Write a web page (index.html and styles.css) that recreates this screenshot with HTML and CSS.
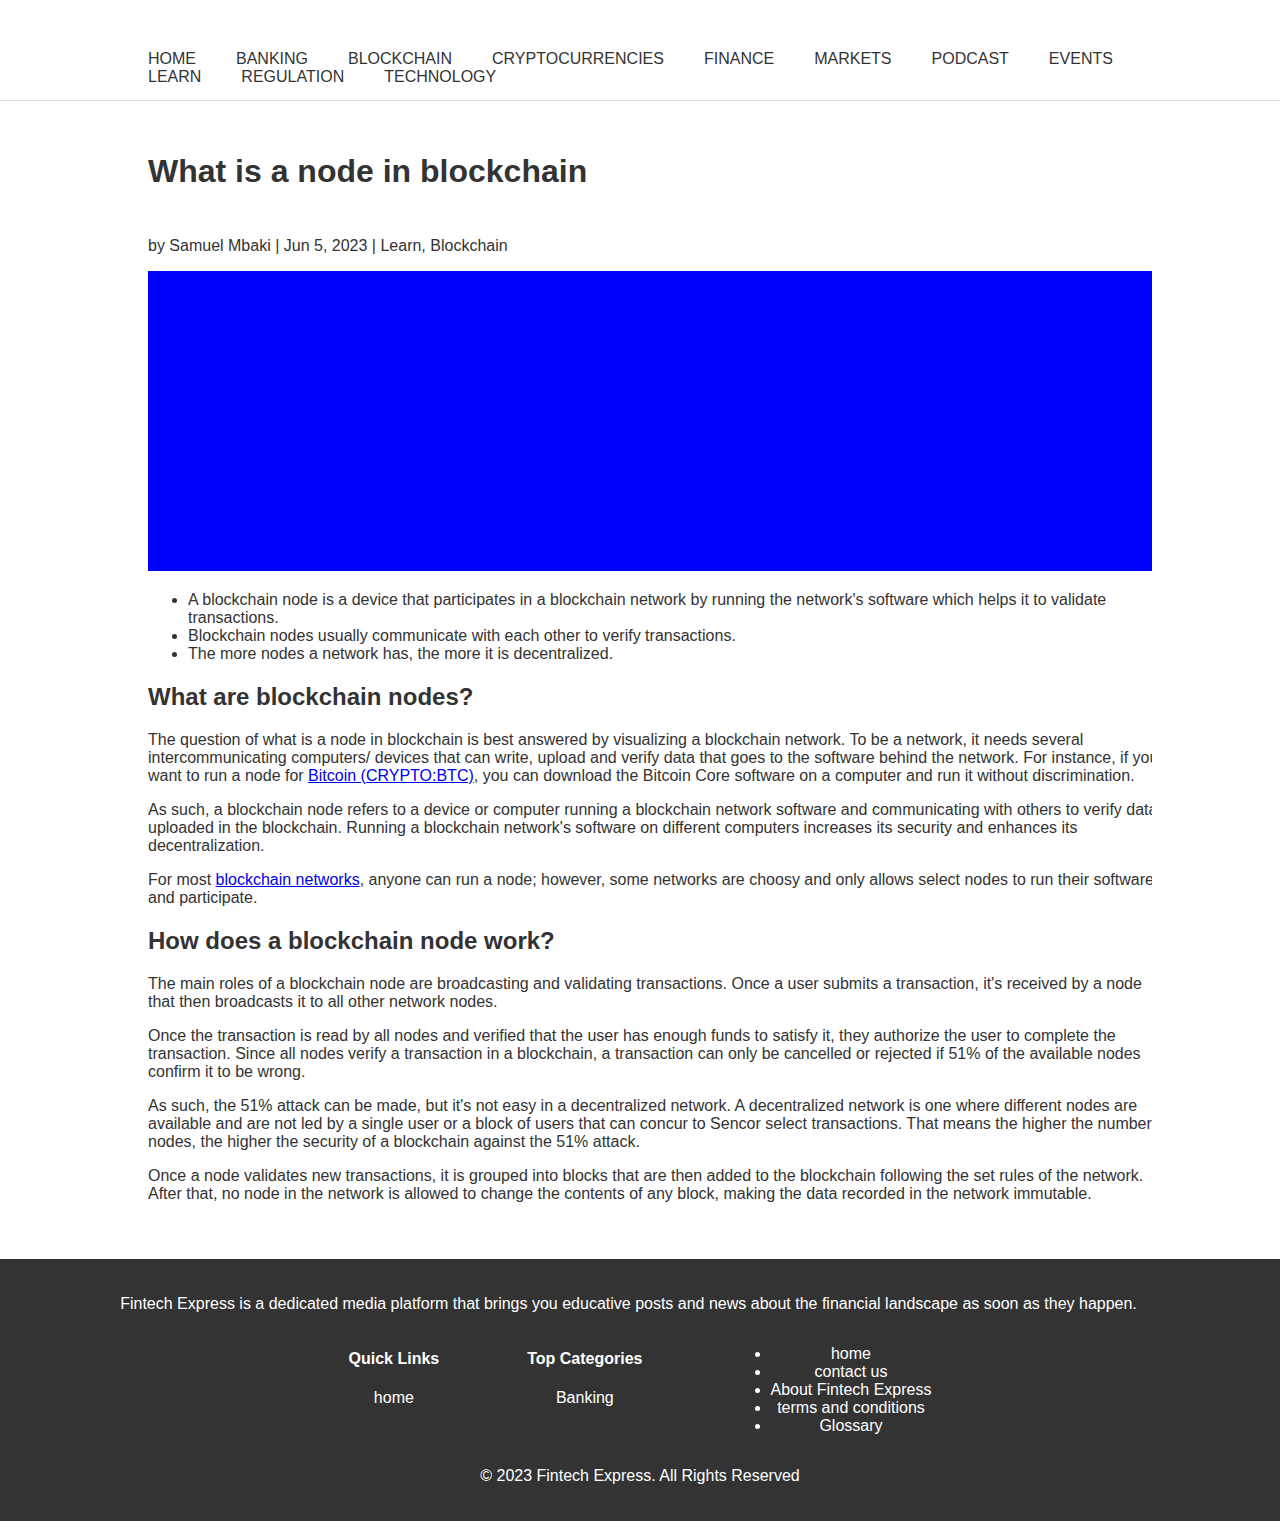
FILE: index.html
```html
<!DOCTYPE html>
<html lang="en">
<head>
<meta charset="utf-8">
<title>What is a node in blockchain</title>
<link rel="stylesheet" href="styles.css">
</head>
<body>
<header class="site-header">
  <div class="wrap">
    <ul class="nav">
      <li>Home</li>
      <li>Banking</li>
      <li>Blockchain</li>
      <li>Cryptocurrencies</li>
      <li>Finance</li>
      <li>Markets</li>
      <li>Podcast</li>
      <li>Events</li>
      <li>Learn</li>
      <li>Regulation</li>
      <li>Technology</li>
    </ul>
  </div>
</header>
<main class="wrap main">
  <article class="article">
    <h1 class="title">What is a node in blockchain</h1>
    <p class="byline">by Samuel Mbaki | Jun 5, 2023 | Learn, Blockchain</p>
    <div class="hero"></div>
    <ul class="points">
      <li>A blockchain node is a device that participates in a blockchain network by running the network's software which helps it to validate transactions.</li>
      <li>Blockchain nodes usually communicate with each other to verify transactions.</li>
      <li>The more nodes a network has, the more it is decentralized.</li>
    </ul>
    <h2>What are blockchain nodes?</h2>
    <p>The question of what is a node in blockchain is best answered by visualizing a blockchain network. To be a network, it needs several intercommunicating computers/ devices that can write, upload and verify data that goes to the software behind the network. For instance, if you want to run a node for <a href="#">Bitcoin (CRYPTO:BTC)</a>, you can download the Bitcoin Core software on a computer and run it without discrimination.</p>
    <p>As such, a blockchain node refers to a device or computer running a blockchain network software and communicating with others to verify data uploaded in the blockchain. Running a blockchain network's software on different computers increases its security and enhances its decentralization.</p>
    <p>For most <a href="#">blockchain networks</a>, anyone can run a node; however, some networks are choosy and only allows select nodes to run their software and participate.</p>
    <h2>How does a blockchain node work?</h2>
    <p>The main roles of a blockchain node are broadcasting and validating transactions. Once a user submits a transaction, it's received by a node that then broadcasts it to all other network nodes.</p>
    <p>Once the transaction is read by all nodes and verified that the user has enough funds to satisfy it, they authorize the user to complete the transaction. Since all nodes verify a transaction in a blockchain, a transaction can only be cancelled or rejected if 51% of the available nodes confirm it to be wrong.</p>
    <p>As such, the 51% attack can be made, but it's not easy in a decentralized network. A decentralized network is one where different nodes are available and are not led by a single user or a block of users that can concur to Sencor select transactions. That means the higher the number of nodes, the higher the security of a blockchain against the 51% attack.</p>
    <p>Once a node validates new transactions, it is grouped into blocks that are then added to the blockchain following the set rules of the network. After that, no node in the network is allowed to change the contents of any block, making the data recorded in the network immutable.</p>
  </article>
</main>
<footer class="site-footer">
  <p class="footer-about">Fintech Express is a dedicated media platform that brings you educative posts and news about the financial landscape as soon as they happen.</p>
  <div class="footer-cols">
    <div class="footer-col">
      <h4>Quick Links</h4>
      <p>home</p>
    </div>
    <div class="footer-col">
      <h4>Top Categories</h4>
      <p>Banking</p>
    </div>
    <ul class="footer-list">
      <li>home</li>
      <li>contact us</li>
      <li>About Fintech Express</li>
      <li>terms and conditions</li>
      <li>Glossary</li>
    </ul>
  </div>
  <p>&copy; 2023 Fintech Express. All Rights Reserved</p>
</footer>
</body>
</html>
```
FILE: styles.css
```css
html, body {
  margin: 0;
  padding: 0;
}
body {
  font-family: "Liberation Sans", Arial, Helvetica, sans-serif;
  font-size: 16px;
  color: #333;
  background: #fff;
}
.wrap {
  width: 1024px;
  margin: 0 auto;
}
.site-header {
  border-bottom: 1px solid #ddd;
  padding: 50px 0 14px;
}
.nav {
  list-style: none;
  margin: 0;
  padding: 0 0 0 20px;
  display: flex;
  flex-wrap: wrap;
  column-gap: 40px;
  row-gap: 0;
  text-transform: uppercase;
}
.main {
  overflow: hidden;
  padding: 30px 0 40px;
}
.article {
  margin-left: 20px;
  width: 1024px;
}
.title {
  font-size: 32px;
  margin: 22px 0 47px;
}
.byline {
  margin: 0 0 16px;
}
.hero {
  height: 300px;
  background: #0000ff;
  margin-bottom: 20px;
}
.points {
  margin: 0 0 16px;
  padding-left: 40px;
}
h2 {
  font-size: 24px;
  margin: 19.92px 0;
}
p {
  margin: 16px 0;
}
a {
  color: #0000ee;
  text-decoration: underline;
}
.site-footer {
  background: #333;
  color: #fff;
  text-align: center;
  padding: 20px;
}
.footer-about {
  margin-right: 23px;
}
.footer-cols {
  display: flex;
  justify-content: center;
  align-items: flex-start;
  gap: 88px;
}
.footer-col h4 {
  margin: 21.28px 0;
  font-size: 16px;
}
.footer-col p {
  margin: 16px 0;
}
.footer-list {
  margin: 16px 0;
  padding-left: 40px;
  text-align: center;
}
```
